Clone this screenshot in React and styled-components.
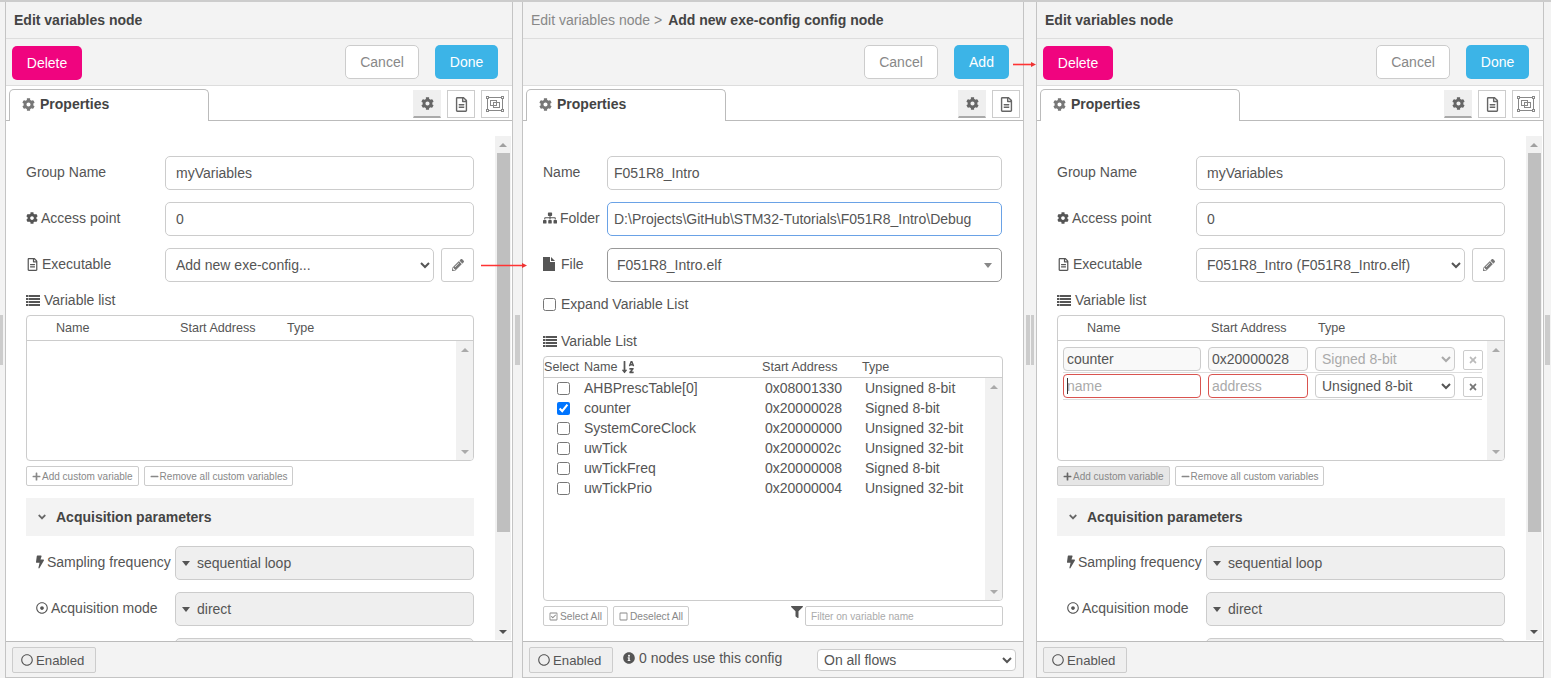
import React from 'react'
import styled, { createGlobalStyle } from 'styled-components'
import {
  FaCog, FaRegFileAlt, FaSitemap, FaBolt, FaRegDotCircle, FaRegCircle,
  FaPencilAlt, FaPlus, FaMinus, FaTimes, FaInfoCircle, FaFilter, FaSortAlphaDown,
  FaRegCheckSquare, FaRegSquare, FaAngleDown,
} from 'react-icons/fa'

const GlobalStyle = createGlobalStyle`
  html, body { margin: 0; padding: 0; height: 100%; overflow: hidden; }
  body { font-family: "Liberation Sans", Arial, sans-serif; font-size: 14px; color: #555; background: #f3f3f3; }
  * { box-sizing: border-box; }
  input, select, button { font-family: inherit; }
`

const Page = styled.div`
  position: relative;
  display: flex;
  width: 1551px;
  height: 678px;
  border-top: 2px solid #ccc;
  overflow: hidden;
`
const Gutter = styled.div`
  flex: 0 0 ${(p) => p.$width}px;
  display: flex;
  align-items: center;
  gap: 1px;
  padding-left: ${(p) => p.$pad || 0}px;
`
const Handle = styled.div`
  width: ${(p) => p.$width}px;
  height: 50px;
  margin-top: -1px;
  background: #ccc;
`
const Panel = styled.section`
  flex: 0 0 ${(p) => p.$width}px;
  display: flex;
  flex-direction: column;
  border: 1px solid #c4c4c4;
  border-top: 0;
  background: #f3f3f3;
  min-width: 0;
`
const Title = styled.header`
  flex: 0 0 37px;
  display: flex;
  align-items: center;
  gap: 6px;
  padding: 0 8px;
  border-bottom: 1px solid #ddd;
  font-weight: bold;
  color: #444;
`
const Crumb = styled.span`
  font-weight: normal;
  color: #888;
`
const Toolbar = styled.div`
  flex: 0 0 47px;
  display: flex;
  align-items: center;
  padding: 0 14px 0 6px;
  border-bottom: 1px solid #ddd;
  gap: 16px;
`
const Spacer = styled.div`
  flex: 1;
`
const ActionButton = styled.button`
  height: 34px;
  width: ${(p) => p.$width}px;
  padding: 0;
  border-radius: 5px;
  font-size: 14px;
  border: 1px solid ${(p) => (p.$kind === 'cancel' ? '#ccc' : 'transparent')};
  color: ${(p) => (p.$kind === 'cancel' ? '#888' : '#fff')};
  margin-top: ${(p) => (p.$kind === 'delete' ? '1px' : '-1px')};
  background: ${(p) => ({ cancel: '#fff', delete: '#f0047f', primary: '#3cb4e7' })[p.$kind]};
`
const TabBar = styled.div`
  flex: 0 0 35px;
  display: flex;
  align-items: flex-end;
  justify-content: space-between;
  padding: 0 3px 0 3px;
  background: #fff;
  border-bottom: 1px solid #bbb;
`
const Tab = styled.div`
  width: 200px;
  height: 32px;
  margin-bottom: -1px;
  display: flex;
  align-items: center;
  gap: 5px;
  padding: 0 0 3px 12px;
  background: #fff;
  border: 1px solid #bbb;
  border-bottom: 0;
  border-radius: 5px 5px 0 0;
  font-weight: bold;
  color: #444;
  svg { color: #777; font-size: 13px; }
`
const ToolGroup = styled.div`
  display: flex;
  gap: 6px;
  margin-bottom: 2px;
`
const ToolButton = styled.div`
  width: 28px;
  height: 28px;
  display: flex;
  align-items: center;
  justify-content: center;
  color: #666;
  border: 1px solid #ccc;
  border-bottom: ${(p) => (p.$active ? '2px solid #aaa' : '1px solid #ccc')};
  border-color: ${(p) => (p.$active ? '#efefef #efefef #aaa' : '#ccc')};
  background: ${(p) => (p.$active ? '#efefef' : '#fff')};
`
const Body = styled.div`
  flex: 1;
  min-height: 0;
  display: flex;
  background: #fff;
  overflow: hidden;
`
const Form = styled.div`
  flex: 1;
  min-width: 0;
  padding: 35px ${(p) => p.$right || 21}px 0 20px;
  overflow: hidden;
`
const Row = styled.div`
  display: flex;
  height: 34px;
  margin-bottom: 12px;
  padding-left: ${(p) => p.$indent || 0}px;
  padding-right: ${(p) => p.$inset || 0}px;
`
const Label = styled.label`
  flex: 0 0 ${(p) => p.$width}px;
  display: flex;
  align-items: center;
  gap: 3px;
  padding-bottom: 2px;
  white-space: nowrap;
`
const TextInput = styled.input`
  flex: 1;
  min-width: 0;
  height: 34px;
  padding: 0 ${(p) => p.$pad || 10}px;
  border: 1px solid ${(p) => (p.$focus ? '#6aa2e6' : '#ccc')};
  border-radius: 5px;
  font-size: 14px;
  color: #555;
  background: #fff;
  outline: none;
`
const NativeSelect = styled.select`
  flex: 1;
  min-width: 0;
  height: 34px;
  padding: 0 6px;
  border: 1px solid #ccc;
  border-radius: 5px;
  font-size: 14px;
  color: #555;
  background: #fff;
`
const EditButton = styled.div`
  flex: 0 0 33px;
  margin-left: 7px;
  display: flex;
  align-items: center;
  justify-content: center;
  border: 1px solid #ccc;
  border-radius: 3px;
  color: #777;
  font-size: 12px;
`
const MenuField = styled.div`
  flex: 1;
  display: flex;
  align-items: center;
  gap: 7px;
  padding-left: 6px;
  background: #efefef;
  border: 1px solid #ccc;
  border-radius: 5px;
  color: #555;
`
const Caret = styled.span`
  width: 0;
  height: 0;
  border-left: 4.5px solid transparent;
  border-right: 4.5px solid transparent;
  border-top: 5px solid ${(p) => p.$color || '#555'};
`
const FileField = styled.div`
  flex: 1;
  display: flex;
  align-items: center;
  justify-content: space-between;
  padding: 0 9px;
  border: 1px solid #999;
  border-radius: 5px;
  color: #555;
`
const ListLabel = styled.div`
  height: 21px;
  margin-top: ${(p) => p.$top || 0}px;
  padding-bottom: 9px;
  display: flex;
  gap: 4px;
  align-items: center;
`
const ListBox = styled.div`
  display: flex;
  flex-direction: column;
  height: ${(p) => p.$height}px;
  border: 1px solid #ccc;
  border-radius: 4px;
  overflow: hidden;
`
const ListHead = styled.div`
  flex: 0 0 ${(p) => p.$height}px;
  display: flex;
  align-items: center;
  border-bottom: 1px solid #ccc;
  white-space: nowrap;
  font-size: 12.6px;
`
const HeadCell = styled.span`
  flex: 0 0 ${(p) => p.$width}px;
  padding-left: ${(p) => p.$pad || 0}px;
  display: flex;
  align-items: center;
  gap: 3px;
`
const ListBody = styled.div`
  flex: 1;
  min-height: 0;
  display: flex;
`
const Rows = styled.div`
  flex: 1;
  min-width: 0;
  padding: ${(p) => p.$pad || '0'};
`
const VarRow = styled.div`
  display: grid;
  grid-template-columns: 138px 100px 140px 20px;
  column-gap: 7px;
  align-items: start;
  height: 26px;
  margin-bottom: 1px;
  border-bottom: 1px solid #ddd;
`
const VarInput = styled.input`
  width: 100%;
  height: 24px;
  padding: 0 3px;
  border: 1px solid ${(p) => (p.$invalid ? '#d9534f' : '#ccc')};
  border-radius: 4px;
  font-size: 14px;
  color: #555;
  background: ${(p) => (p.$invalid ? '#fff' : '#f9f9f9')};
  outline: none;
  &::placeholder { color: #aaa; }
`
const VarSelect = styled.select`
  width: 100%;
  height: 24px;
  padding: 0 2px;
  border: 1px solid #ccc;
  border-radius: 4px;
  font-size: 14px;
  color: ${(p) => (p.disabled ? '#aaa' : '#555')};
  background: ${(p) => (p.disabled ? '#f9f9f9' : '#fff')};
  opacity: 1;
`
const RemoveButton = styled.div`
  width: 20px;
  height: 20px;
  margin: 3px 0 0 1px;
  display: flex;
  align-items: center;
  justify-content: center;
  border: 1px solid #ccc;
  border-radius: 2px;
  font-size: 10px;
  color: ${(p) => (p.$muted ? '#bbb' : '#777')};
`
const CellWrap = styled.div`
  position: relative;
`
const TextCursor = styled.span`
  position: absolute;
  left: 4px;
  top: 4px;
  width: 1px;
  height: 16px;
  background: #333;
`
const SmallRow = styled.div`
  display: flex;
  align-items: flex-start;
  gap: 5px;
  margin-top: 5px;
`
const SmallButton = styled.div`
  height: 20px;
  display: flex;
  align-items: center;
  gap: ${(p) => p.$gap || 1}px;
  padding: 0 5px;
  border: 1px solid #ccc;
  border-radius: 2px;
  font-size: ${(p) => p.$size || 10}px;
  color: #888;
  white-space: nowrap;
  background: ${(p) => (p.$active ? '#e6e6e6' : '#fff')};
  svg { font-size: 9px; color: ${(p) => (p.$active ? '#666' : '#888')}; }
`
const Section = styled.div`
  height: 38px;
  margin: 12px 0 10px;
  display: flex;
  align-items: center;
  gap: 8px;
  padding-left: 10px;
  background: #f3f3f3;
  font-weight: bold;
  color: #444;
  svg { font-size: 12px; color: #666; }
`
const Track = styled.div`
  flex: 0 0 ${(p) => p.$width}px;
  margin: ${(p) => p.$margin || 0};
  display: flex;
  flex-direction: column;
  align-items: center;
  background: #f1f1f1;
`
const ArrowSlot = styled.div`
  flex: 0 0 17px;
  display: flex;
  align-items: center;
  justify-content: center;
`
const ArrowUp = styled.span`
  border-left: 4px solid transparent;
  border-right: 4px solid transparent;
  border-bottom: 4px solid ${(p) => p.$color};
`
const ArrowDown = styled.span`
  border-left: 4px solid transparent;
  border-right: 4px solid transparent;
  border-top: 4px solid ${(p) => p.$color};
`
const Thumb = styled.div`
  flex: 0 0 ${(p) => p.$height}px;
  width: 13px;
  background: #bfbfbf;
`
const Fill = styled.div`
  flex: 1;
`
const PickRow = styled.div`
  display: flex;
  align-items: center;
  height: 20px;
  white-space: nowrap;
`
const PickCheck = styled.div`
  flex: 0 0 40px;
  display: flex;
  padding-left: 13px;
  input { margin: 0; width: 13px; height: 13px; }
`
const PickCell = styled.span`
  flex: 0 0 ${(p) => p.$width}px;
`
const ExpandRow = styled.label`
  display: flex;
  align-items: center;
  gap: 5px;
  height: 20px;
  input { margin: 0; width: 13px; height: 13px; }
`
const FilterWrap = styled.div`
  flex: 1;
  display: flex;
  justify-content: flex-end;
  gap: 2px;
  color: #555;
  font-size: 12px;
`
const FilterInput = styled.input`
  width: 198px;
  height: 20px;
  padding: 0 5px;
  border: 1px solid #ccc;
  border-radius: 2px;
  font-size: 10.1px;
  outline: none;
  &::placeholder { color: #aaa; }
`
const Footer = styled.footer`
  flex: 0 0 36px;
  display: flex;
  align-items: center;
  gap: 10px;
  padding: 1px 7px 0 6px;
  border-top: 1px solid #bbb;
`
const Toggle = styled.div`
  width: 84px;
  height: 26px;
  margin-top: -1px;
  padding: 1px 0 0 8px;
  display: flex;
  align-items: center;
  gap: 3px;
  background: #efefef;
  border: 1px solid #ccc;
  border-radius: 2px;
  font-size: 13.2px;
  svg { font-size: 12px; }
`
const ConfigNote = styled.span`
  display: flex;
  align-items: center;
  gap: 4px;
  margin-top: -4px;
  svg { font-size: 12px; }
`
const ScopeSelect = styled.select`
  width: 199px;
  height: 22px;
  margin-left: auto;
  padding: 0 2px;
  border: 1px solid #ccc;
  border-radius: 4px;
  font-size: 14px;
  color: #555;
  background: #fff;
`
const ArrowMark = styled.svg`
  position: absolute;
  left: ${(p) => p.$x}px;
  top: ${(p) => p.$y}px;
`
const BoltIcon = styled(FaBolt)`
  flex: none;
  width: 8px;
  height: 14px;
`

const Scrollbar = ({ width, margin, thumb, color, bottomColor }) => (
  <Track $width={width} $margin={margin}>
    <ArrowSlot><ArrowUp $color={color} /></ArrowSlot>
    {thumb ? <Thumb $height={thumb} /> : null}
    <Fill />
    <ArrowSlot><ArrowDown $color={bottomColor || color} /></ArrowSlot>
  </Track>
)

const ListIcon = () => (
  <svg width="14" height="11" viewBox="0 0 14 11" fill="#555">
    <rect x="0" y="0" width="2.5" height="2" />
    <rect x="3" y="0" width="11" height="2" />
    <rect x="0" y="3" width="2.5" height="2" />
    <rect x="3" y="3" width="11" height="2" />
    <rect x="0" y="6" width="2.5" height="2" />
    <rect x="3" y="6" width="11" height="2" />
    <rect x="0" y="9" width="2.5" height="2" />
    <rect x="3" y="9" width="11" height="2" />
  </svg>
)

const FileIcon = () => (
  <svg width="15" height="14" viewBox="0 0 15 14" fill="#555">
    <path d="M0 0 H7 V5 H12 V14 H0 Z" />
    <path d="M8 0 L12 4 H8 Z" />
  </svg>
)

const FrameIcon = () => (
  <svg width="18" height="16" viewBox="0 0 18 16" fill="none" stroke="#888" strokeWidth="1">
    <rect x="1.5" y="1.5" width="15" height="13" />
    <rect x="4.5" y="4.5" width="6" height="5" />
    <rect x="7.5" y="6.5" width="6" height="5" />
    <rect x="0.5" y="0.5" width="2" height="2" fill="#fff" />
    <rect x="15.5" y="0.5" width="2" height="2" fill="#fff" />
    <rect x="0.5" y="13.5" width="2" height="2" fill="#fff" />
    <rect x="15.5" y="13.5" width="2" height="2" fill="#fff" />
  </svg>
)

const Arrow = ({ x, y, length }) => (
  <ArrowMark $x={x} $y={y} width={length} height="7" viewBox={`0 0 ${length} 7`}>
    <line x1="0" y1="3.5" x2={length - 3} y2="3.5" stroke="#f33" strokeWidth="1.6" />
    <path d={`M${length - 5} 1 L${length} 3.5 L${length - 5} 6 Z`} fill="#e33" />
  </ArrowMark>
)

const Tabs = ({ frame }) => (
  <TabBar>
    <Tab><FaCog />Properties</Tab>
    <ToolGroup>
      <ToolButton $active><FaCog size={13} /></ToolButton>
      <ToolButton><FaRegFileAlt size={15} /></ToolButton>
      {frame ? <ToolButton><FrameIcon /></ToolButton> : null}
    </ToolGroup>
  </TabBar>
)

const EditVariablesPanel = ({ executable, rows, addActive }) => (
  <Panel $width={508}>
    <Title>Edit variables node</Title>
    <Toolbar>
      <ActionButton $kind="delete" $width={70}>Delete</ActionButton>
      <Spacer />
      <ActionButton $kind="cancel" $width={74}>Cancel</ActionButton>
      <ActionButton $kind="primary" $width={63}>Done</ActionButton>
    </Toolbar>
    <Tabs frame />
    <Body>
      <Form>
        <Row>
          <Label $width={139}>Group Name</Label>
          <TextInput readOnly value="myVariables" />
        </Row>
        <Row>
          <Label $width={139}><FaCog size={12} />Access point</Label>
          <TextInput readOnly value="0" />
        </Row>
        <Row>
          <Label $width={139}><FaRegFileAlt size={13} />Executable</Label>
          <NativeSelect value={executable} onChange={() => {}}>
            <option>{executable}</option>
          </NativeSelect>
          <EditButton><FaPencilAlt /></EditButton>
        </Row>
        <ListLabel><ListIcon />Variable list</ListLabel>
        <ListBox $height={146}>
          <ListHead $height={25}>
            <HeadCell $width={153} $pad={29}>Name</HeadCell>
            <HeadCell $width={107}>Start Address</HeadCell>
            <HeadCell $width={60}>Type</HeadCell>
          </ListHead>
          <ListBody>
            <Rows $pad="6px 5px 0 5px">
              {rows.map((row) => (
                <VarRow key={row.type}>
                  <CellWrap>
                    <VarInput readOnly $invalid={row.invalid} value={row.name} placeholder="name" />
                    {row.invalid ? <TextCursor /> : null}
                  </CellWrap>
                  <VarInput readOnly $invalid={row.invalid} value={row.address} placeholder="address" />
                  <VarSelect disabled={!row.invalid} value={row.type} onChange={() => {}}>
                    <option>{row.type}</option>
                  </VarSelect>
                  <RemoveButton $muted={!row.invalid}><FaTimes /></RemoveButton>
                </VarRow>
              ))}
            </Rows>
            <Scrollbar width={17} color="#aaa" />
          </ListBody>
        </ListBox>
        <SmallRow>
          <SmallButton $active={addActive}><FaPlus />Add custom variable</SmallButton>
          <SmallButton><FaMinus />Remove all custom variables</SmallButton>
        </SmallRow>
        <Section><FaAngleDown />Acquisition parameters</Section>
        <Row $indent={10}>
          <Label $width={139}><BoltIcon />Sampling frequency</Label>
          <MenuField><Caret />sequential loop</MenuField>
        </Row>
        <Row $indent={10}>
          <Label $width={139}><FaRegDotCircle size={12} />Acquisition mode</Label>
          <MenuField><Caret />direct</MenuField>
        </Row>
        <Row $indent={10}>
          <Label $width={139} />
          <MenuField />
        </Row>
      </Form>
      <Scrollbar width={16} margin="15px 1px 1px 0" thumb={379} color="#a0a0a0" bottomColor="#505050" />
    </Body>
    <Footer>
      <Toggle><FaRegCircle />Enabled</Toggle>
    </Footer>
  </Panel>
)

const variables = [
  ['AHBPrescTable[0]', '0x08001330', 'Unsigned 8-bit'],
  ['counter', '0x20000028', 'Signed 8-bit', true],
  ['SystemCoreClock', '0x20000000', 'Unsigned 32-bit'],
  ['uwTick', '0x2000002c', 'Unsigned 32-bit'],
  ['uwTickFreq', '0x20000008', 'Signed 8-bit'],
  ['uwTickPrio', '0x20000004', 'Unsigned 32-bit'],
]

const ConfigPanel = () => (
  <Panel $width={502}>
    <Title><Crumb>Edit variables node &gt;</Crumb> Add new exe-config config node</Title>
    <Toolbar>
      <Spacer />
      <ActionButton $kind="cancel" $width={74}>Cancel</ActionButton>
      <ActionButton $kind="primary" $width={55}>Add</ActionButton>
    </Toolbar>
    <Tabs />
    <Body>
      <Form $right={20}>
        <Row $inset={1}>
          <Label $width={64}>Name</Label>
          <TextInput $pad={6} readOnly value="F051R8_Intro" />
        </Row>
        <Row $inset={1}>
          <Label $width={64}><FaSitemap size={14} />Folder</Label>
          <TextInput $pad={6} $focus readOnly value="D:\Projects\GitHub\STM32-Tutorials\F051R8_Intro\Debug" />
        </Row>
        <Row $inset={1}>
          <Label $width={64}><FileIcon />File</Label>
          <FileField>F051R8_Intro.elf<Caret $color="#888" /></FileField>
        </Row>
        <ExpandRow><input type="checkbox" readOnly checked={false} />Expand Variable List</ExpandRow>
        <ListLabel $top={21}><ListIcon />Variable List</ListLabel>
        <ListBox $height={245}>
          <ListHead $height={21}>
            <HeadCell $width={40}>Select</HeadCell>
            <HeadCell $width={178}>Name <FaSortAlphaDown size={14} /></HeadCell>
            <HeadCell $width={100}>Start Address</HeadCell>
            <HeadCell $width={60}>Type</HeadCell>
          </ListHead>
          <ListBody>
            <Rows>
              {variables.map(([name, address, type, checked]) => (
                <PickRow key={name}>
                  <PickCheck><input type="checkbox" readOnly checked={!!checked} /></PickCheck>
                  <PickCell $width={181}>{name}</PickCell>
                  <PickCell $width={100}>{address}</PickCell>
                  <PickCell $width={110}>{type}</PickCell>
                </PickRow>
              ))}
            </Rows>
            <Scrollbar width={17} color="#aaa" />
          </ListBody>
        </ListBox>
        <SmallRow>
          <SmallButton $size={10.2} $gap={2}><FaRegCheckSquare />Select All</SmallButton>
          <SmallButton $size={10.2} $gap={2}><FaRegSquare />Deselect All</SmallButton>
          <FilterWrap>
            <FaFilter />
            <FilterInput placeholder="Filter on variable name" />
          </FilterWrap>
        </SmallRow>
      </Form>
    </Body>
    <Footer>
      <Toggle><FaRegCircle />Enabled</Toggle>
      <ConfigNote><FaInfoCircle />0 nodes use this config</ConfigNote>
      <ScopeSelect value="On all flows" onChange={() => {}}>
        <option>On all flows</option>
      </ScopeSelect>
    </Footer>
  </Panel>
)

export default function App() {
  return (
    <Page>
      <GlobalStyle />
      <Gutter $width={5}><Handle $width={3} /></Gutter>
      <EditVariablesPanel executable="Add new exe-config..." rows={[]} />
      <Gutter $width={9} $pad={2}><Handle $width={5} /></Gutter>
      <ConfigPanel />
      <Gutter $width={12} $pad={2}><Handle $width={4} /><Handle $width={3} /></Gutter>
      <EditVariablesPanel
        executable="F051R8_Intro (F051R8_Intro.elf)"
        addActive
        rows={[
          { name: 'counter', address: '0x20000028', type: 'Signed 8-bit' },
          { name: '', address: '', type: 'Unsigned 8-bit', invalid: true },
        ]}
      />
      <Gutter $width={7} $pad={1}><Handle $width={5} /></Gutter>
      <Arrow x={481} y={260} length={46} />
      <Arrow x={1013} y={59} length={23} />
    </Page>
  )
}
